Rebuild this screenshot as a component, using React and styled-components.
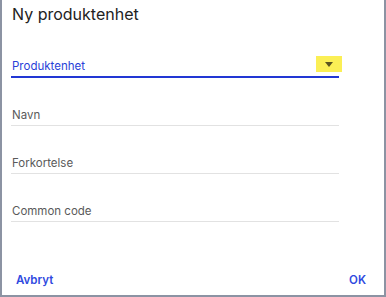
import React from "react";
import styled, { createGlobalStyle } from "styled-components";

const Global = createGlobalStyle`
  html, body { margin: 0; padding: 0; background: #fff; }
  body { font-family: Inter, "Noto Sans", sans-serif; }
`;

const Dialog = styled.div`
  box-sizing: border-box;
  width: 386px;
  height: 297px;
  background: #fff;
  border-left: 2px solid #8c93a3;
  border-right: 2px solid #8c93a3;
  border-bottom: 2px solid #8c93a3;
  display: flex;
  flex-direction: column;
  padding: 5px 45px 0 9px;
`;

const Title = styled.h1`
  margin: 0 0 0 1px;
  font-size: 16px;
  font-weight: 400;
  color: #222;
  line-height: 18px;
`;

const Fields = styled.div`
  display: flex;
  flex-direction: column;
  margin-top: 16px;
`;

const Field = styled.div`
  position: relative;
  display: flex;
  align-items: flex-end;
  height: ${(p) => (p.$active ? "39px" : "48px")};
  padding-bottom: 3px;
  box-sizing: border-box;
  border-bottom: ${(p) => (p.$active ? "2px solid #2237d4" : "1px solid #e2e2e2")};
`;

const Label = styled.span`
  font-size: 11.5px;
  line-height: 14px;
  padding-left: 1px;
  color: ${(p) => (p.$active ? "#2a3fd8" : "#5a5a5a")};
`;

const Arrow = styled.span`
  position: absolute;
  right: -3px;
  bottom: 4px;
  width: 26px;
  height: 16px;
  background: #fbef55;
  display: flex;
  align-items: center;
  justify-content: center;
`;

const Footer = styled.div`
  margin-top: auto;
  margin-right: -27px;
  display: flex;
  justify-content: space-between;
  padding: 0 0 8px 5px;
`;

const Action = styled.button`
  background: none;
  border: none;
  padding: 0;
  font-family: inherit;
  font-size: 11.5px;
  font-weight: 600;
  color: #2f4ae0;
  cursor: pointer;
`;

export default function App() {
  return (
    <>
      <Global />
      <Dialog>
        <Title>Ny produktenhet</Title>
        <Fields>
          <Field $active>
            <Label $active>Produktenhet</Label>
            <Arrow>
              <svg width="8" height="5" viewBox="0 0 8 5">
                <path d="M0 0h8L4 5z" fill="#5a5420" />
              </svg>
            </Arrow>
          </Field>
          <Field>
            <Label>Navn</Label>
          </Field>
          <Field>
            <Label>Forkortelse</Label>
          </Field>
          <Field>
            <Label>Common code</Label>
          </Field>
        </Fields>
        <Footer>
          <Action>Avbryt</Action>
          <Action>OK</Action>
        </Footer>
      </Dialog>
    </>
  );
}
